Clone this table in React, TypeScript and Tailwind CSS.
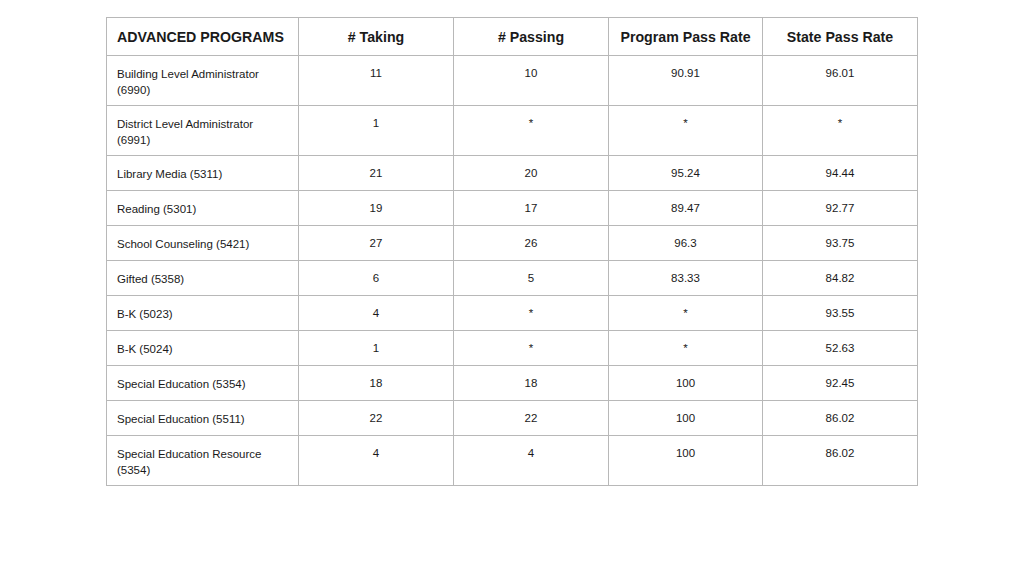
import React from "react";

const rows: [string, string, string, string, string][] = [
  ["Building Level Administrator (6990)", "11", "10", "90.91", "96.01"],
  ["District Level Administrator (6991)", "1", "*", "*", "*"],
  ["Library Media (5311)", "21", "20", "95.24", "94.44"],
  ["Reading (5301)", "19", "17", "89.47", "92.77"],
  ["School Counseling (5421)", "27", "26", "96.3", "93.75"],
  ["Gifted (5358)", "6", "5", "83.33", "84.82"],
  ["B-K (5023)", "4", "*", "*", "93.55"],
  ["B-K (5024)", "1", "*", "*", "52.63"],
  ["Special Education (5354)", "18", "18", "100", "92.45"],
  ["Special Education (5511)", "22", "22", "100", "86.02"],
  ["Special Education Resource (5354)", "4", "4", "100", "86.02"],
];

export default function App() {
  return (
    <div
      className="w-[1024px] h-[576px] bg-white pt-[17px] pl-[106px]"
      style={{ fontFamily: '"Liberation Sans", Arial, sans-serif' }}
    >
      <table className="table-fixed border-collapse w-[811px] text-[#1a1a1a]">
        <colgroup>
          <col className="w-[192px]" />
          <col className="w-[155px]" />
          <col className="w-[155px]" />
          <col className="w-[154px]" />
          <col className="w-[155px]" />
        </colgroup>
        <thead>
          <tr className="h-[38px]">
            <th className="border border-[#b8b8b8] text-left pl-[10px] text-[14.2px] font-bold leading-[20px]">
              ADVANCED PROGRAMS
            </th>
            <th className="border border-[#b8b8b8] text-center text-[14.2px] font-bold leading-[20px]"># Taking</th>
            <th className="border border-[#b8b8b8] text-center text-[14.2px] font-bold leading-[20px]"># Passing</th>
            <th className="border border-[#b8b8b8] text-center text-[14.2px] font-bold leading-[20px]">Program Pass Rate</th>
            <th className="border border-[#b8b8b8] text-center text-[14.2px] font-bold leading-[20px]">State Pass Rate</th>
          </tr>
        </thead>
        <tbody>
          {rows.map((r, i) => (
            <tr key={i}>
              <td className="border border-[#b8b8b8] align-top pl-[10px] pr-[30px] pt-[10px] pb-[7px] text-[11.5px] leading-[16px]">
                {r[0]}
              </td>
              {r.slice(1).map((v, j) => (
                <td
                  key={j}
                  className="border border-[#b8b8b8] align-top text-center pt-[9px] pb-[9px] text-[11.5px] leading-[16px]"
                >
                  {v}
                </td>
              ))}
            </tr>
          ))}
        </tbody>
      </table>
    </div>
  );
}
